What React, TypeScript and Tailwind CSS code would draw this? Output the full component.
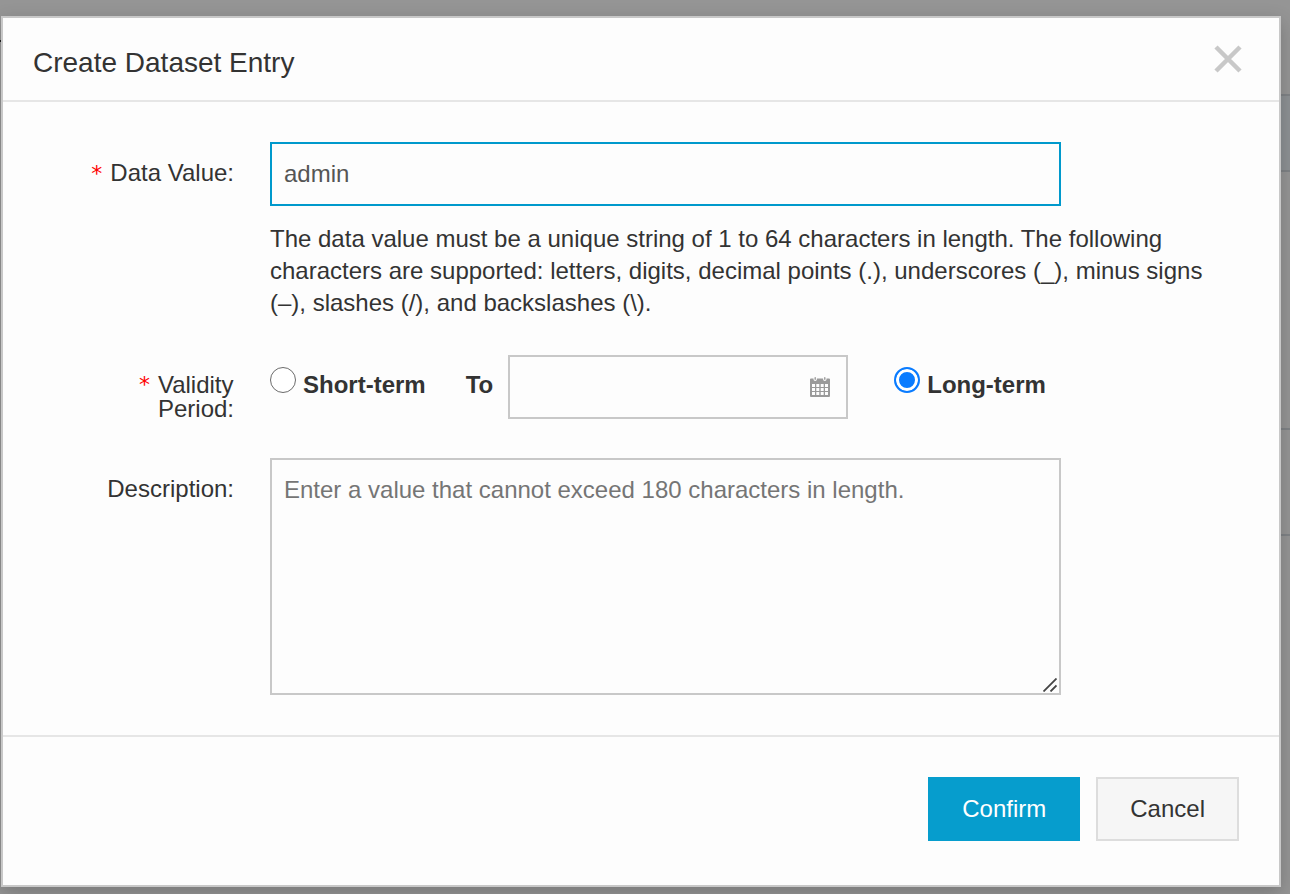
import { useState } from "react";

function CalendarIcon() {
  return (
    <svg viewBox="0 0 20 20" className="size-5" fill="#9a9a9a" aria-hidden="true">
      <path
        fillRule="evenodd"
        d="M1 1.500h2.500v.8a1.700 1.700 0 0 0 3.400 0v-.8h6.200v.8a1.700 1.700 0 0 0 3.400 0v-.8H19a1 1 0 0 1 1 1V19a1 1 0 0 1-1 1H1a1 1 0 0 1-1-1V2.500a1 1 0 0 1 1-1ZM2 7v3h3V7Zm4.300 0v3h3V7Zm4.400 0v3h3V7ZM15 7v3h3V7ZM2 11v3h3v-3Zm4.300 0v3h3v-3Zm4.400 0v3h3v-3Zm4.300 0v3h3v-3ZM2 15v3h3v-3Zm4.300 0v3h3v-3Zm4.400 0v3h3v-3Zm4.300 0v3h3v-3Z"
      />
      <rect x="4.500" y="0" width="1.400" height="3" rx=".7" />
      <rect x="14.100" y="0" width="1.400" height="3" rx=".7" />
    </svg>
  );
}

function Required() {
  return <span className="mr-2 font-['DejaVu_Sans',sans-serif] text-[22px] text-[#ff0000]">*</span>;
}

const radioClass =
  "size-[26px] shrink-0 appearance-none rounded-full border border-[#6b6b6b] bg-white checked:border-2 checked:border-[#0a7cff] checked:bg-[#0a7cff] checked:shadow-[inset_0_0_0_3px_white]";

export default function App() {
  const [value, setValue] = useState("admin");
  const [period, setPeriod] = useState("long");

  return (
    <div className="relative min-h-screen bg-[#959595] pt-4 pr-[9px] pb-[7px] pl-px font-['Liberation_Sans',Arial,sans-serif] text-2xl text-[#333333]">
      <div className="absolute top-10 left-0 h-0.5 w-1 bg-[#222222]" aria-hidden="true" />
      <div className="absolute inset-y-0 right-0 flex w-9 flex-col overflow-hidden" aria-hidden="true">
        <div className="h-[94px]" />
        <div className="h-[78px] border-y-2 border-[#7f8386] bg-[#8d9194]" />
        <div className="h-[258px] border-b-2 border-[#7f8386]" />
        <div className="h-[106px] border-b-2 border-[#7f8386]" />
      </div>

      <section
        role="dialog"
        aria-labelledby="dialog-title"
        className="relative border-2 border-[#c8c8c8] bg-[#fdfdfd] shadow-[0_6px_18px_rgba(0,0,0,0.2)]"
      >
        <header className="flex items-center justify-between border-b-2 border-[#e6e6e6] pt-7 pr-9 pb-5 pl-[30px]">
          <h1 id="dialog-title" className="text-[28px] leading-[34px]">
            Create Dataset Entry
          </h1>
          <button type="button" aria-label="Close" className="-mt-2">
            <svg viewBox="0 0 30 30" className="size-[30px]" stroke="#c8c8c8" strokeWidth="4.500" aria-hidden="true">
              <path d="M3 3 27 27M27 3 3 27" />
            </svg>
          </button>
        </header>

        <form id="entry-form" className="py-10">
          <div className="flex">
            <label htmlFor="data-value" className="w-[231px] shrink-0 pt-[15px] text-right leading-8">
              <Required />
              Data Value:
            </label>
            <div className="ml-9 min-w-0 flex-1 pr-[70px]">
              <input
                id="data-value"
                type="text"
                value={value}
                onChange={(e) => setValue(e.target.value)}
                className="block h-16 w-full max-w-[791px] border-2 border-[#0099cc] bg-[#fdfdfd] px-3 text-[#555555] outline-none"
              />
              <p className="mt-[17px] leading-8">
                The data value must be a unique string of 1 to 64 characters in length. The following characters are
                supported: letters, digits, decimal points (.), underscores (_), minus signs (–), slashes (/), and
                backslashes (\).
              </p>
            </div>
          </div>

          <div className="mt-9 flex">
            <div id="period-label" className="flex w-[231px] shrink-0 justify-end pt-[18px] leading-6">
              <Required />
              <span>
                Validity
                <br />
                Period:
              </span>
            </div>
            <div role="radiogroup" aria-labelledby="period-label" className="ml-9 flex items-start font-bold">
              <input
                id="short"
                type="radio"
                name="period"
                checked={period === "short"}
                onChange={() => setPeriod("short")}
                className={radioClass + " mt-3"}
              />
              <label htmlFor="short" className="ml-[7px] pt-3.5 leading-8">
                Short-term
              </label>
              <label htmlFor="end-date" className="ml-10 pt-3.5 leading-8">
                To
              </label>
              <div className="ml-[15px] flex h-16 w-[340px] items-center border-2 border-[#c8c8c8] bg-[#fdfdfd] pr-4">
                <input
                  id="end-date"
                  type="text"
                  className="h-full min-w-0 flex-1 px-3 font-normal text-[#555555] outline-none"
                />
                <CalendarIcon />
              </div>
              <input
                id="long"
                type="radio"
                name="period"
                checked={period === "long"}
                onChange={() => setPeriod("long")}
                className={radioClass + " mt-3 ml-[46px]"}
              />
              <label htmlFor="long" className="ml-[7px] pt-3.5 leading-8">
                Long-term
              </label>
            </div>
          </div>

          <div className="mt-[37px] flex">
            <label htmlFor="description" className="w-[231px] shrink-0 pt-[15px] text-right leading-8">
              Description:
            </label>
            <div className="ml-9 min-w-0 flex-1 pr-[70px]">
              <div className="relative max-w-[791px]">
                <textarea
                  id="description"
                  placeholder="Enter a value that cannot exceed 180 characters in length."
                  className="block h-[237px] w-full resize-none border-2 border-[#c8c8c8] bg-[#fdfdfd] px-3 py-3.5 leading-8 text-[#555555] outline-none placeholder:text-[#757575]"
                />
                <svg
                  viewBox="0 0 14 14"
                  className="absolute right-1 bottom-[3px] size-3.5"
                  stroke="#444444"
                  strokeWidth="1.800"
                  aria-hidden="true"
                >
                  <path d="M.5 13.500 13.500.5M7.500 13.500l6-6" />
                </svg>
              </div>
            </div>
          </div>
        </form>

        <footer className="flex justify-end gap-4 border-t-2 border-[#e6e6e6] pt-10 pr-10 pb-11">
          <button type="submit" form="entry-form" className="h-16 bg-[#069dcd] px-[34px] text-white">
            Confirm
          </button>
          <button type="button" className="h-16 border-2 border-[#dddddd] bg-[#f6f6f6] px-8">
            Cancel
          </button>
        </footer>
      </section>
    </div>
  );
}
